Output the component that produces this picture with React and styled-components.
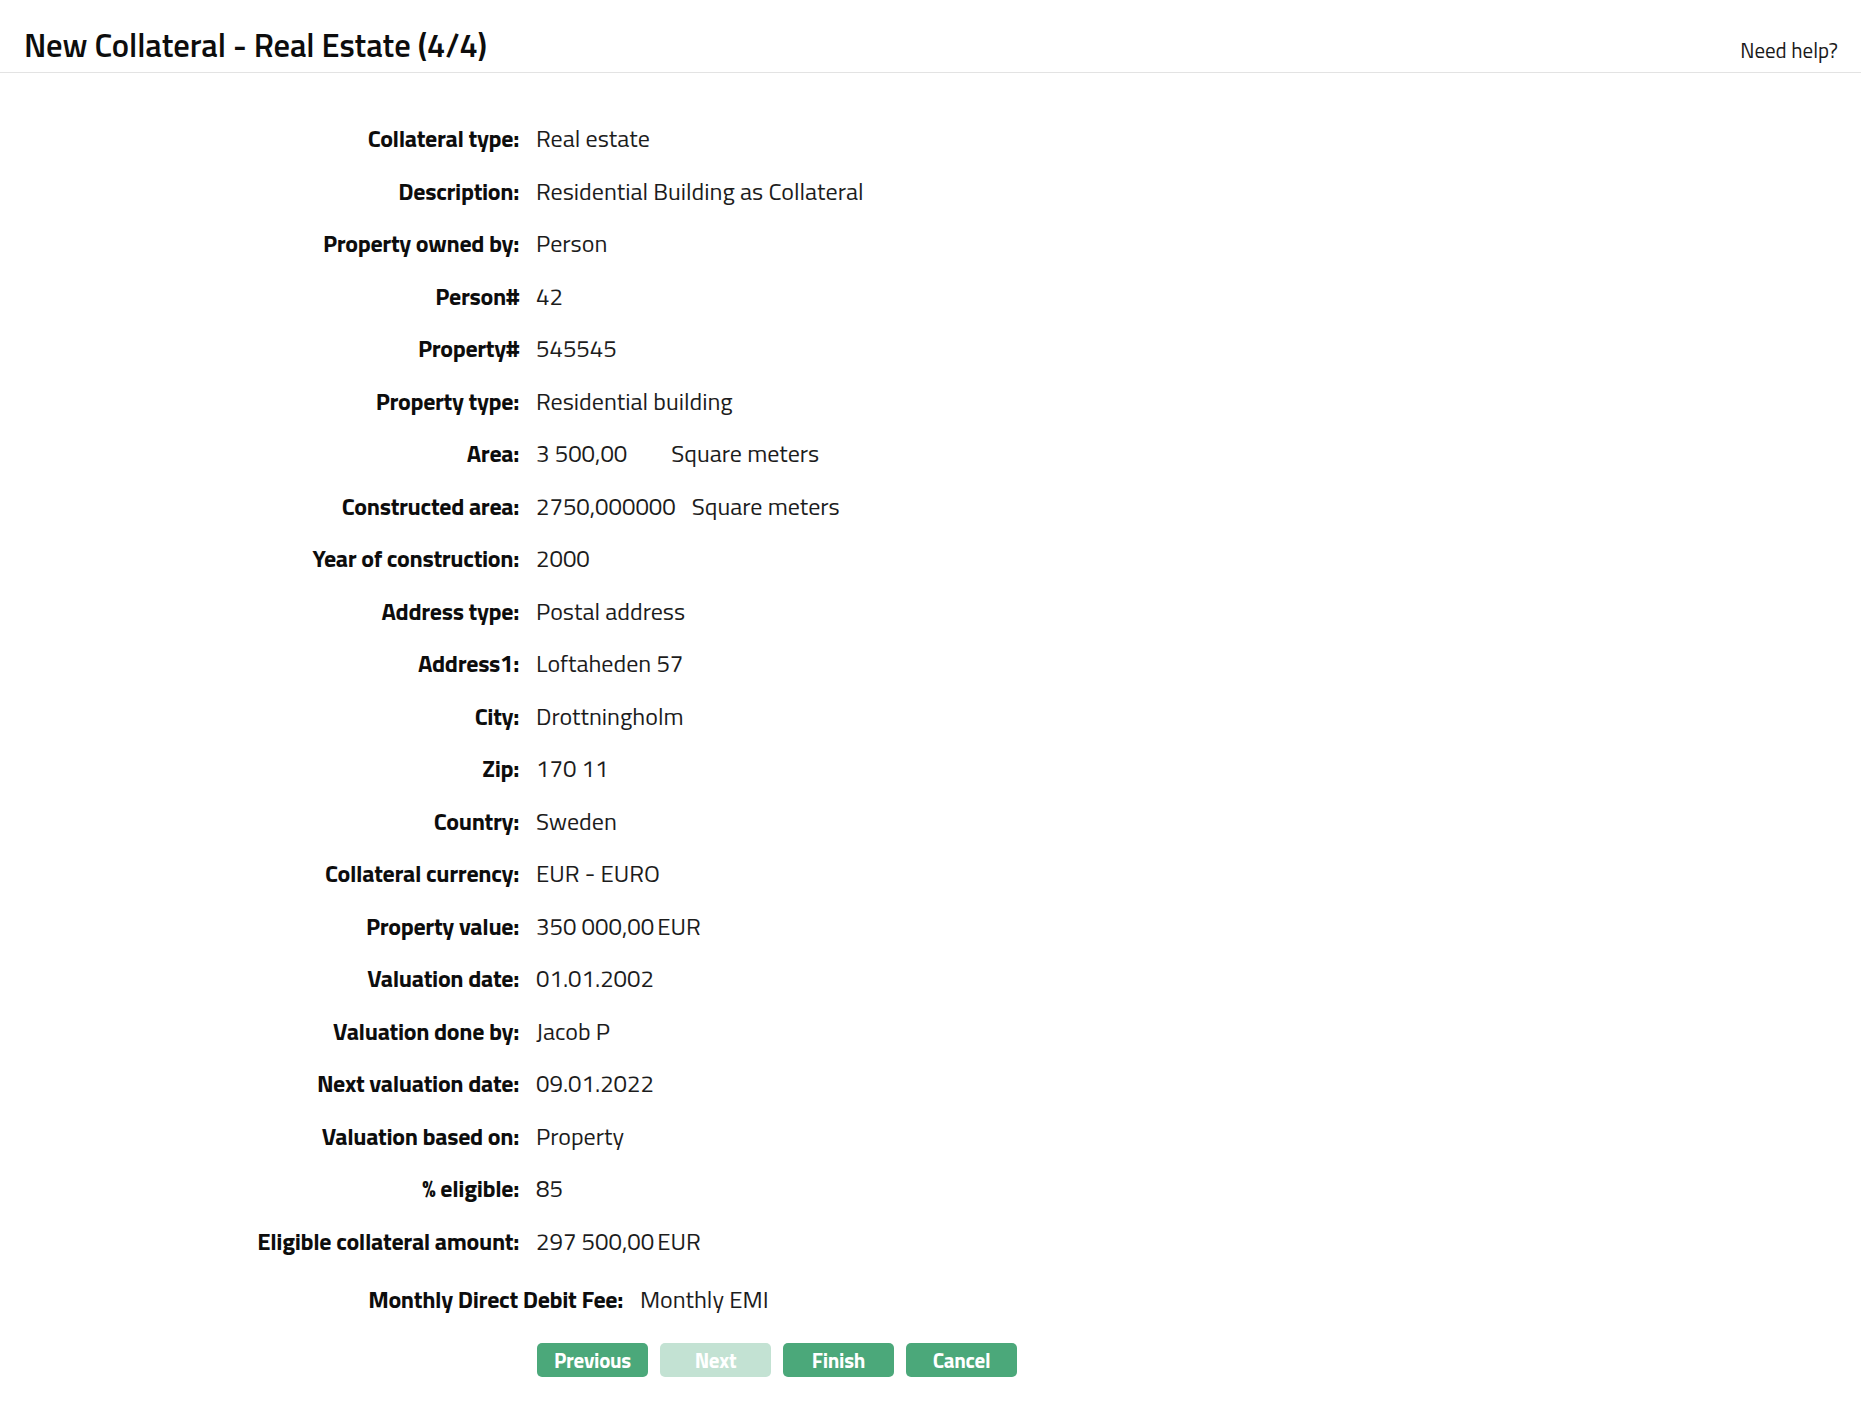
import styled, { createGlobalStyle } from "styled-components";

const GlobalStyle = createGlobalStyle`
  html, body { margin:0; padding:0; background:#fff; }
  body { font-family:"Titillium Web", Roboto, "Liberation Sans", sans-serif; color:#111; }
`;

const Header = styled.header`
  height:73px;display:flex;align-items:flex-end;justify-content:space-between;
  padding:0 23px 0 24px;border-bottom:1px solid #e3e3e3;box-sizing:border-box;
`;
const Title = styled.h1`
  margin:0;font-size:32.6px;font-weight:600;color:#0d0d0d;line-height:1;
  padding-bottom:10px;letter-spacing:-.1px;
`;
const Help = styled.a`
  font-size:21px;color:#1a1a1a;text-decoration:none;line-height:1;padding-bottom:11px;cursor:pointer;
`;
const Form = styled.div`
  padding-top:39px;display:flex;flex-direction:column;
`;
const Row = styled.div`
  display:grid;grid-template-columns:${p => p.$labelWidth || 519}px 1fr;
  column-gap:17px;height:52.5px;align-items:center;
  margin-top:${p => p.$gap || 0}px;
`;
const Label = styled.span`
  text-align:right;font-weight:700;font-size:24px;color:#0d0d0d;letter-spacing:-.35px;
  white-space:nowrap;
`;
const Value = styled.span`
  font-size:24px;color:#1c1c1c;white-space:nowrap;display:flex;align-items:center;
`;
const Amount = styled.span`
  margin-right:${p => p.$space || 0}px;
`;
const Buttons = styled.div`
  display:flex;gap:12px;padding-left:537px;margin-top:17px;
`;
const Btn = styled.button`
  width:111px;height:34px;border:none;border-radius:5px;padding:0;
  background:${p => p.disabled ? "#c3e2d3" : "#4ba87a"};
  color:#fff;font-family:inherit;font-size:21px;font-weight:700;letter-spacing:-.3px;
  cursor:${p => p.disabled ? "default" : "pointer"};
`;

const rows = [
  ["Collateral type:", "Real estate"],
  ["Description:", "Residential Building as Collateral"],
  ["Property owned by:", "Person"],
  ["Person#", "42"],
  ["Property#", "545545"],
  ["Property type:", "Residential building"],
  ["Area:", { amount: "3 500,00", unit: "Square meters", space: 44 }],
  ["Constructed area:", { amount: "2750,000000", unit: "Square meters", space: 16 }],
  ["Year of construction:", "2000"],
  ["Address type:", "Postal address"],
  ["Address1:", "Loftaheden 57"],
  ["City:", "Drottningholm"],
  ["Zip:", "170 11"],
  ["Country:", "Sweden"],
  ["Collateral currency:", "EUR - EURO"],
  ["Property value:", { amount: "350 000,00", unit: "EUR", space: 3 }],
  ["Valuation date:", "01.01.2002"],
  ["Valuation done by:", "Jacob P"],
  ["Next valuation date:", "09.01.2022"],
  ["Valuation based on:", "Property"],
  ["% eligible:", "85"],
  ["Eligible collateral amount:", { amount: "297 500,00", unit: "EUR", space: 3 }],
];

export default function App() {
  return (
    <>
      <GlobalStyle />
      <Header>
        <Title>New Collateral - Real Estate (4/4)</Title>
        <Help>Need help?</Help>
      </Header>
      <Form>
        {rows.map(([label, val]) => (
          <Row key={label}>
            <Label>{label}</Label>
            {typeof val === "string"
              ? <Value>{val}</Value>
              : <Value><Amount $space={val.space}>{val.amount}</Amount>{val.unit}</Value>}
          </Row>
        ))}
        <Row $labelWidth={623} $gap={6}>
          <Label>Monthly Direct Debit Fee:</Label>
          <Value>Monthly EMI</Value>
        </Row>
      </Form>
      <Buttons>
        <Btn>Previous</Btn>
        <Btn disabled>Next</Btn>
        <Btn>Finish</Btn>
        <Btn>Cancel</Btn>
      </Buttons>
    </>
  );
}
